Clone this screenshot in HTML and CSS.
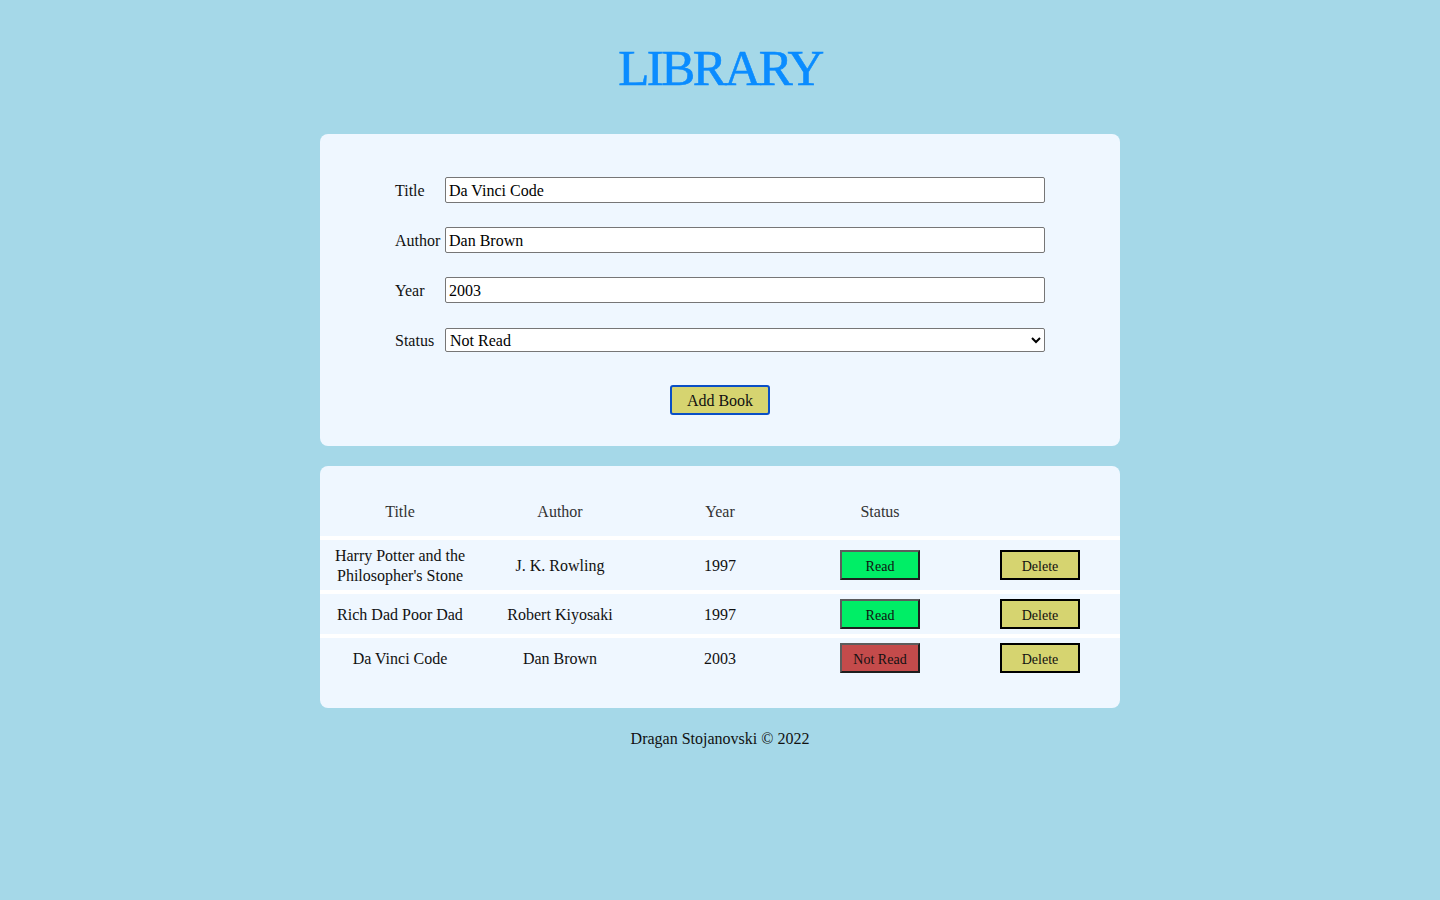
FILE: index.html
```html
<!DOCTYPE html>
<html lang="en">
<head>
<meta charset="utf-8">
<title>Library</title>
<link rel="stylesheet" href="styles.css">
</head>
<body>
<h1 class="page-title">LIBRARY</h1>
<main class="container">
  <section class="card form-card">
    <form class="book-form">
      <div class="form-row">
        <label class="form-label" for="title">Title</label>
        <input class="form-input" id="title" type="text" value="Da Vinci Code">
      </div>
      <div class="form-row">
        <label class="form-label" for="author">Author</label>
        <input class="form-input" id="author" type="text" value="Dan Brown">
      </div>
      <div class="form-row">
        <label class="form-label" for="year">Year</label>
        <input class="form-input" id="year" type="text" value="2003">
      </div>
      <div class="form-row">
        <label class="form-label" for="status">Status</label>
        <select class="form-select" id="status">
          <option>Not Read</option>
          <option>Read</option>
        </select>
      </div>
      <div class="form-actions">
        <button type="button" class="add-btn">Add Book</button>
      </div>
    </form>
  </section>

  <section class="card table-card">
    <table class="book-table">
      <thead>
        <tr>
          <th>Title</th>
          <th>Author</th>
          <th>Year</th>
          <th>Status</th>
          <th></th>
        </tr>
      </thead>
      <tbody>
        <tr>
          <td>Harry Potter and the Philosopher's Stone</td>
          <td>J. K. Rowling</td>
          <td>1997</td>
          <td><button type="button" class="status-btn read">Read</button></td>
          <td><button type="button" class="delete-btn">Delete</button></td>
        </tr>
        <tr>
          <td>Rich Dad Poor Dad</td>
          <td>Robert Kiyosaki</td>
          <td>1997</td>
          <td><button type="button" class="status-btn read">Read</button></td>
          <td><button type="button" class="delete-btn">Delete</button></td>
        </tr>
        <tr>
          <td>Da Vinci Code</td>
          <td>Dan Brown</td>
          <td>2003</td>
          <td><button type="button" class="status-btn not-read">Not Read</button></td>
          <td><button type="button" class="delete-btn">Delete</button></td>
        </tr>
      </tbody>
    </table>
  </section>
</main>
<footer class="footer">Dragan Stojanovski © 2022</footer>
</body>
</html>
```

FILE: styles.css
```css
* {
  box-sizing: border-box;
}

body {
  margin: 0;
  background: #a5d8e8;
  font-family: "Liberation Serif", "Times New Roman", serif;
  font-size: 16px;
  color: #111;
}

.page-title {
  margin: 38px 0 36px;
  height: 60px;
  line-height: 60px;
  text-align: center;
  font-size: 51px;
  font-weight: normal;
  letter-spacing: -2.5px;
  color: #0a8cff;
  -webkit-text-stroke: 0.6px #0a8cff;
}

.container {
  width: 800px;
  margin: 0 auto;
  display: flex;
  flex-direction: column;
  gap: 20px;
}

.card {
  background: #eff7ff;
  border-radius: 8px;
}

.form-card {
  padding: 43px 75px 31px;
}

.book-form {
  display: flex;
  flex-direction: column;
}

.form-row {
  display: grid;
  grid-template-columns: 50px 600px;
  align-items: center;
  height: 26px;
  margin-bottom: 24px;
}

.form-row:nth-child(4) {
  margin-bottom: 32px;
}

.form-label {
  font-size: 16px;
  white-space: nowrap;
  padding-top: 2px;
}

.form-input {
  height: 26px;
  width: 600px;
  border: 1px solid #767676;
  border-radius: 2px;
  padding: 2px 3px 0;
  font-family: inherit;
  font-size: 16px;
  background: #fff;
  color: #000;
}

.form-select {
  height: 24px;
  width: 600px;
  border: 1px solid #767676;
  border-radius: 2px;
  padding: 1px 1px 0 0;
  font-family: inherit;
  font-size: 16px;
  background: #fff;
  color: #000;
}

.form-actions {
  display: flex;
  justify-content: center;
}

.add-btn {
  width: 100px;
  height: 30px;
  background: #d6d470;
  border: 2px solid #0a4fc6;
  border-radius: 3px;
  font-family: inherit;
  font-size: 16px;
  color: #111;
  padding: 2px 0 0;
}

.table-card {
  padding: 20px 0 30px;
}

.book-table {
  width: 100%;
  border-collapse: collapse;
  table-layout: fixed;
}

.book-table th {
  font-weight: normal;
  color: #333;
  line-height: 20px;
  padding: 16px 10px 14px;
  text-align: center;
}

.book-table td {
  text-align: center;
  line-height: 20px;
  padding: 6px 10px 4px;
  vertical-align: middle;
}

.book-table tbody tr {
  border-top: 4px solid #ffffff;
}

.status-btn,
.delete-btn {
  display: block;
  margin: -1px auto 1px;
  width: 80px;
  height: 30px;
  padding: 3px 0 0;
  font-family: inherit;
  font-size: 14px;
  color: #111;
  border-radius: 0;
}

.status-btn {
  border: 2px solid;
  border-color: #5c5c5c #1e1e1e #1e1e1e #5c5c5c;
}

.status-btn.read {
  background: #00ee66;
}

.status-btn.not-read {
  background: #c44b4b;
}

.delete-btn {
  background: #d6d470;
  border: 2px solid #000;
}

.footer {
  text-align: center;
  margin-top: 21px;
  line-height: 20px;
}
```
